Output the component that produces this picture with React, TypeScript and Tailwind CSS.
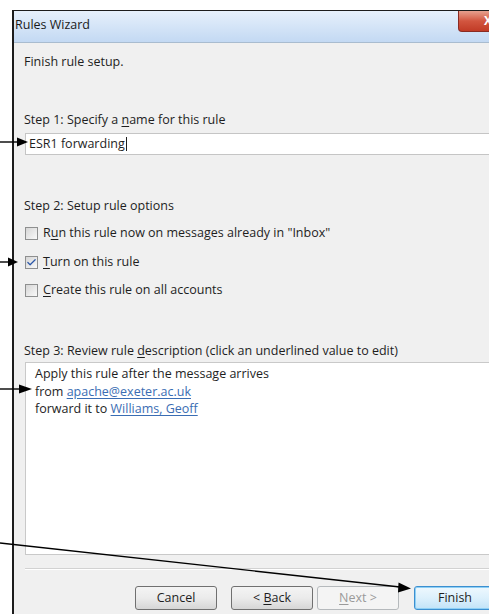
import { Check } from 'lucide-react';

const font = { fontFamily: '"Open Sans", "Noto Sans", sans-serif' };

function CheckRow({ checked, children }: { checked?: boolean; children: React.ReactNode }) {
    return (
        <div className="flex h-4 items-center">
            <span className="ml-px flex h-[13px] w-[13px] shrink-0 items-center justify-center border border-[#8e8f8f] bg-linear-to-br from-[#d6d6d6] to-[#f9f9f9]">
                {checked && <Check className="h-[11px] w-[11px] text-[#2b57a8]" strokeWidth={2.6} />}
            </span>
            <span className="ml-[5px] whitespace-nowrap">{children}</span>
        </div>
    );
}

function WizardButton({
    children,
    variant = 'normal',
}: {
    children: React.ReactNode;
    variant?: 'normal' | 'disabled' | 'default';
}) {
    const look = {
        normal: 'border-[#707070] bg-linear-to-b from-[#f4f4f4] via-[#ebebeb] to-[#d6d6d6] text-[#1e1e1e]',
        disabled: 'border-[#b5b9bc] bg-[#f4f4f4] text-[#9a9a9a]',
        default:
            'border-[#3c8fd0] bg-linear-to-b from-[#eef8fe] via-[#dcf0fc] to-[#c2e3f8] text-[#1e1e1e] shadow-[inset_0_0_0_1px_#8fd0f5]',
    }[variant];
    return (
        <div className={`flex h-6 w-[82px] shrink-0 items-center justify-center whitespace-nowrap rounded-[3px] border ${look}`}>
            {children}
        </div>
    );
}

export default function App() {
    return (
        <div className="relative h-[614px] w-[489px] overflow-hidden bg-white text-[12.5px] text-[#1e1e1e]" style={font}>
            {/* dialog frame */}
            <div className="ml-3 mt-[10px] flex h-[604px] w-[520px] flex-col border-l-2 border-t border-[#1c1c1c]">
                {/* title bar */}
                <div className="flex h-[32px] shrink-0 items-start border-b border-[#a9bccf] bg-linear-to-b from-[#e6f0fb] to-[#c3d9f3]">
                    <span className="w-[444px] shrink-0 whitespace-nowrap pl-px pt-[6px] leading-4 text-[#1a1a1a]">
                        Rules Wizard
                    </span>
                    <div className="flex h-[21px] w-[44px] shrink-0 items-center rounded-bl-[4px] border border-t-0 border-[#8a2b22] bg-linear-to-b from-[#e6a08f] via-[#d2553f] to-[#c13b26]">
                        <span className="ml-[25px] text-[12px] font-bold leading-none text-white">X</span>
                    </div>
                </div>

                {/* body */}
                <div className="flex flex-1 flex-col bg-[#f0f0f0] pl-[10px] leading-4">
                    <div className="mt-[11px]">Finish rule setup.</div>

                    <div className="mt-[42px]">
                        Step 1: Specify a <u className="underline-offset-2">n</u>ame for this rule
                    </div>
                    <div className="ml-px mt-[5px] flex h-[22px] items-center border border-r-0 border-[#c5c5c5] bg-white pl-[3px]">
                        ESR1 forwarding
                        <span className="ml-px h-[14px] w-px bg-[#1e1e1e]" />
                    </div>

                    <div className="mt-[43px]">Step 2: Setup rule options</div>
                    <div className="mt-[11px]">
                        <CheckRow>
                            R<u className="underline-offset-2">u</u>n this rule now on messages already in "Inbox"
                        </CheckRow>
                    </div>
                    <div className="mt-[13px]">
                        <CheckRow checked>
                            <u className="underline-offset-2">T</u>urn on this rule
                        </CheckRow>
                    </div>
                    <div className="mt-[12px]">
                        <CheckRow>
                            <u className="underline-offset-2">C</u>reate this rule on all accounts
                        </CheckRow>
                    </div>

                    <div className="mt-[45px] whitespace-nowrap">
                        Step 3: Review rule <u className="underline-offset-2">d</u>escription (click an underlined value to edit)
                    </div>
                    <div className="ml-px mt-[3px] h-[193px] border border-r-0 border-[#c9c9c9] bg-white pl-[9px] pt-[2px] leading-[17.5px]">
                        <div>Apply this rule after the message arrives</div>
                        <div>
                            from <span className="text-[#3a6db3] underline underline-offset-2">apache@exeter.ac.uk</span>
                        </div>
                        <div>
                            forward it to <span className="text-[#3a6db3] underline underline-offset-2">Williams, Geoff</span>
                        </div>
                    </div>

                    <div className="ml-px mt-[13px] border-t border-b border-t-[#d2d2d2] border-b-white" />

                    <div className="mt-[16px] flex pl-[111px]">
                        <WizardButton>Cancel</WizardButton>
                        <div className="ml-[14px]">
                            <WizardButton>
                                &lt;&nbsp;<u className="underline-offset-2">B</u>ack
                            </WizardButton>
                        </div>
                        <div className="ml-1">
                            <WizardButton variant="disabled">
                                <u className="underline-offset-2">N</u>ext &gt;
                            </WizardButton>
                        </div>
                        <div className="ml-[15px]">
                            <WizardButton variant="default">Finish</WizardButton>
                        </div>
                    </div>
                </div>
            </div>

            {/* callout arrows */}
            <svg className="pointer-events-none absolute inset-0" width="489" height="614" viewBox="0 0 489 614">
                <g stroke="#000" strokeWidth="1.4" fill="none">
                    <line x1="0" y1="142" x2="18" y2="142" />
                    <line x1="0" y1="262" x2="9" y2="262" />
                    <line x1="0" y1="389" x2="20" y2="389" />
                    <line x1="0" y1="543" x2="400" y2="587" />
                </g>
                <g fill="#000">
                    <polygon points="17,137.5 28,142 17,146.5" />
                    <polygon points="8,257.5 18,262 8,266.5" />
                    <polygon points="19,384.5 32,389 19,393.5" />
                    <polygon points="398.5,582.5 411,588.5 398,592.5" />
                </g>
            </svg>
        </div>
    );
}
